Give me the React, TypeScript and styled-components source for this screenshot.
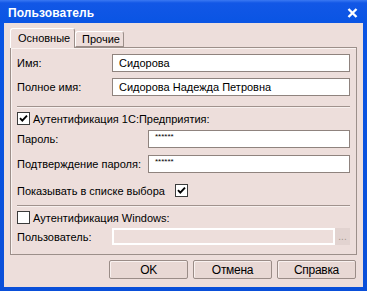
import React, { FC } from 'react';
import styled, { createGlobalStyle } from 'styled-components';

const GlobalStyle = createGlobalStyle`
  html, body {
    margin: 0;
    padding: 0;
    background: #0a4fd9;
  }
  body {
    font-family: 'Liberation Sans', Arial, sans-serif;
    font-size: 11px;
    color: #000;
  }
`;

const Window = styled.div`
  width: 367px;
  height: 291px;
  box-sizing: border-box;
  display: flex;
  flex-direction: column;
  padding: 0 4px 4px 4px;
  background: linear-gradient(180deg, #3a78f2 0px, #1257e6 3px, #0b55e4 20px, #0a4fd9 100%);
`;

const TitleBar = styled.div`
  height: 23px;
  box-sizing: border-box;
  display: flex;
  align-items: center;
  justify-content: space-between;
  padding: 3px 5px 0 4px;
  color: #fff;
  font-weight: bold;
  font-size: 12px;
  letter-spacing: 0.1px;
`;

const Client = styled.div`
  flex: 1;
  background: #eddedb;
  display: flex;
  flex-direction: column;
  padding: 5px 6px 0 6px;
`;

const TabStrip = styled.div`
  display: flex;
  align-items: flex-end;
  height: 19px;
`;

const Tab = styled.div<{ $active?: boolean }>`
  box-sizing: border-box;
  height: ${(p) => (p.$active ? '20px' : '16px')};
  margin-bottom: ${(p) => (p.$active ? '-1px' : '0')};
  padding: ${(p) => (p.$active ? '3px 0 0 7px' : '1px 0 0 6px')};
  border: 1px solid #9c8f8a;
  border-bottom: ${(p) => (p.$active ? 'none' : '1px solid #9c8f8a')};
  border-left-color: #ffffff;
  border-top-color: #ffffff;
  border-radius: 3px 3px 0 0;
  background: #eddedb;
  position: relative;
  z-index: ${(p) => (p.$active ? 1 : 0)};
  width: ${(p) => (p.$active ? '65px' : '49px')};
  white-space: nowrap;
  overflow: hidden;
`;

const Panel = styled.div`
  box-sizing: border-box;
  height: 208px;
  border: 1px solid #9c8f8a;
  box-shadow: inset 1px 1px 0 #faf3f1;
  padding: 6px 6px 0 6px;
  display: flex;
  flex-direction: column;
`;

const Row = styled.div<{ $top?: number; $h?: number }>`
  display: flex;
  align-items: center;
  height: ${(p) => p.$h ?? 18}px;
  margin-top: ${(p) => p.$top ?? 0}px;
`;

const Label = styled.div<{ $w: number }>`
  width: ${(p) => p.$w}px;
  flex: none;
  white-space: nowrap;
`;

const Field = styled.div<{ $small?: boolean }>`
  flex: 1;
  height: 100%;
  box-sizing: border-box;
  background: #fff;
  border: 1px solid #8f837e;
  padding: ${(p) => (p.$small ? '2px 0 0 6px' : '1px 0 0 6px')};
  font-size: ${(p) => (p.$small ? '8px' : '11px')};
  line-height: ${(p) => (p.$small ? '8px' : '15px')};
  white-space: nowrap;
  overflow: hidden;
`;

const DisabledField = styled.div`
  flex: 1;
  height: 100%;
  box-sizing: border-box;
  background: #eddedb;
  border: 2px solid #fff;
`;

const DotsButton = styled.div`
  width: 15px;
  height: 100%;
  box-sizing: border-box;
  background: #e2d3d0;
  color: #a3958f;
  font-size: 10px;
  display: flex;
  align-items: flex-end;
  justify-content: center;
  padding-bottom: 3px;
`;

const Separator = styled.div<{ $top: number }>`
  margin-top: ${(p) => p.$top}px;
  height: 0;
  border-top: 1px solid #a0928d;
  border-bottom: 1px solid #f8f0ee;
`;

const Box = styled.div`
  width: 13px;
  height: 13px;
  box-sizing: border-box;
  border: 1px solid #3b3b3b;
  background: #fff;
  flex: none;
  display: flex;
  align-items: center;
  justify-content: center;
`;

const CheckText = styled.span`
  margin-left: 3px;
  white-space: nowrap;
`;

const ButtonRow = styled.div`
  display: flex;
  justify-content: flex-end;
  gap: 5px;
  margin-top: 5px;
  margin-right: 1px;
`;

const Button = styled.div`
  width: 79px;
  height: 19px;
  box-sizing: border-box;
  border: 1px solid #9a8c87;
  border-radius: 2px;
  background: #e8d8d4;
  box-shadow: inset 1px 1px 0 #f9f1ef;
  display: flex;
  align-items: center;
  justify-content: center;
  font-size: 12px;
  letter-spacing: -0.3px;
`;

const CheckBox: FC<{ checked?: boolean }> = ({ checked }) => (
  <Box>
    {checked && (
      <svg width="9" height="9" viewBox="0 0 9 9">
        <path d="M1 4.2 L3.3 6.6 L8 1.6" stroke="#000" strokeWidth="1.9" fill="none" />
      </svg>
    )}
  </Box>
);

const App: FC = () => {
  return (
    <>
      <GlobalStyle />
      <Window>
        <TitleBar>
          <span>Пользователь</span>
          <svg width="11" height="10" viewBox="0 0 11 10">
            <path d="M1.5 1 L9.5 9 M9.5 1 L1.5 9" stroke="#fff" strokeWidth="2.4" />
          </svg>
        </TitleBar>
        <Client>
          <TabStrip>
            <Tab $active>Основные</Tab>
            <Tab>Прочие</Tab>
          </TabStrip>
          <Panel>
            <Row>
              <Label $w={95}>Имя:</Label>
              <Field>Сидорова</Field>
            </Row>
            <Row $top={6}>
              <Label $w={95}>Полное имя:</Label>
              <Field>Сидорова Надежда Петровна</Field>
            </Row>
            <Separator $top={10} />
            <Row $top={4} $h={13}>
              <CheckBox checked />
              <CheckText>Аутентификация 1С:Предприятия:</CheckText>
            </Row>
            <Row $top={5}>
              <Label $w={131}>Пароль:</Label>
              <Field $small>******</Field>
            </Row>
            <Row $top={7}>
              <Label $w={131}>Подтверждение пароля:</Label>
              <Field $small>******</Field>
            </Row>
            <Row $top={11} $h={13}>
              <Label $w={158}>Показывать в списке выбора</Label>
              <CheckBox checked />
            </Row>
            <Separator $top={8} />
            <Row $top={4} $h={13}>
              <CheckBox />
              <CheckText>Аутентификация Windows:</CheckText>
            </Row>
            <Row $top={4} $h={17}>
              <Label $w={95}>Пользователь:</Label>
              <DisabledField />
              <DotsButton>...</DotsButton>
            </Row>
          </Panel>
          <ButtonRow>
            <Button>OK</Button>
            <Button>Отмена</Button>
            <Button>Справка</Button>
          </ButtonRow>
        </Client>
      </Window>
    </>
  );
};

export default App;
